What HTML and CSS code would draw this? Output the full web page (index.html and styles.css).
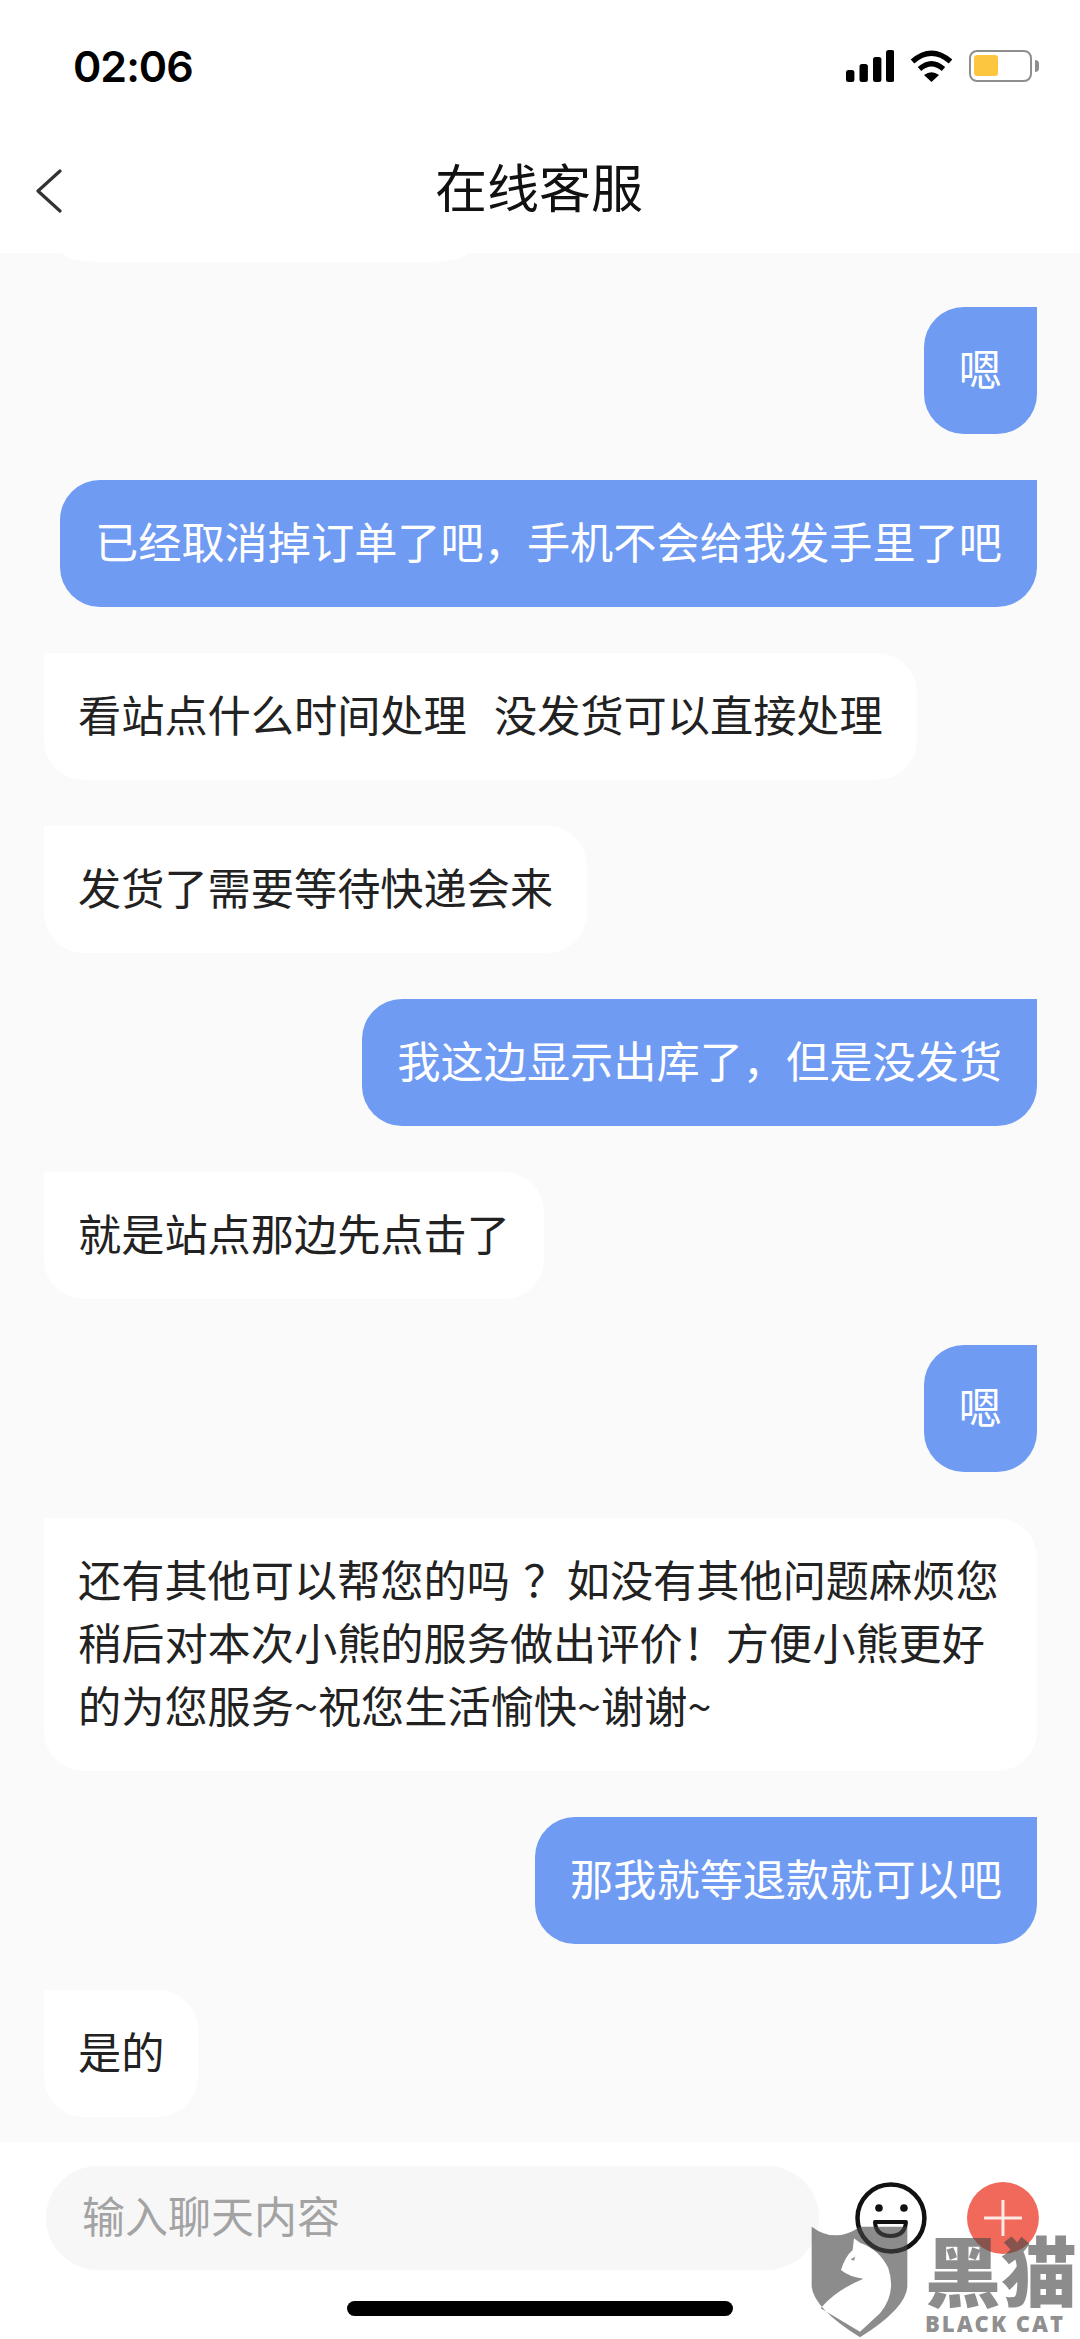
FILE: index.html
```html
<!DOCTYPE html>
<html lang="zh-CN">
<head>
    <meta charset="UTF-8">
    <meta name="viewport" content="width=device-width, initial-scale=1.0">
    <title>在线客服</title>
    <link rel="stylesheet" href="styles.css">
</head>
<body>
    <div class="top">
        <div class="status-bar">
            <span class="time">02:06</span>
            <div class="status-icons">
                <svg class="signal" width="48" height="32" viewBox="0 0 48 32">
                    <rect x="0" y="20" width="8.4" height="12" rx="2.5"/>
                    <rect x="13.5" y="14" width="8.4" height="18" rx="2.5"/>
                    <rect x="27" y="7" width="8.4" height="25" rx="2.5"/>
                    <rect x="40" y="0" width="8.4" height="32" rx="2.5"/>
                </svg>
                <svg class="wifi" width="43" height="32" viewBox="0 0 43 32">
                    <path d="M2.5 11.5Q21.5 -5 40.5 11.5" fill="none" stroke="#000" stroke-width="5.4"/>
                    <path d="M9.5 19Q21.5 8.5 33.5 19" fill="none" stroke="#000" stroke-width="5.2"/>
                    <path d="M14 25Q21.5 19.5 29 25L21.5 32Z"/>
                </svg>
                <div class="battery">
                    <div class="battery-fill"></div>
                </div>
                <div class="battery-nub"></div>
            </div>
        </div>
        <div class="nav">
            <svg class="back" width="30" height="46" viewBox="0 0 30 46">
                <path d="M24 3L2 23L24 43" fill="none" stroke="#333" stroke-width="3.2" stroke-linecap="round" stroke-linejoin="round"/>
            </svg>
            <h1 class="title">在线客服</h1>
        </div>
    </div>

    <div class="chat">
        <div class="peek"></div>
        <div class="msg user">嗯</div>
        <div class="msg user">已经取消掉订单了吧，手机不会给我发手里了吧</div>
        <div class="msg agent">看站点什么时间处理  没发货可以直接处理</div>
        <div class="msg agent">发货了需要等待快递会来</div>
        <div class="msg user">我这边显示出库了，但是没发货</div>
        <div class="msg agent">就是站点那边先点击了</div>
        <div class="msg user">嗯</div>
        <div class="msg agent">还有其他可以帮您的吗 ？如没有其他问题麻烦您稍后对本次小熊的服务做出评价！方便小熊更好的为您服务~祝您生活愉快~谢谢~</div>
        <div class="msg user">那我就等退款就可以吧</div>
        <div class="msg agent">是的</div>
    </div>

    <div class="bottom">
        <div class="input-row">
            <div class="input">输入聊天内容</div>
            <svg class="smile" width="72" height="72" viewBox="0 0 72 72">
                <circle cx="36" cy="36" r="33.5" fill="#fff" stroke="#111" stroke-width="4.5"/>
                <circle cx="24" cy="26" r="3.8" fill="#111"/>
                <circle cx="49" cy="26" r="3.8" fill="#111"/>
                <path d="M20 40H51Q50 54 35.5 54Q21 54 20 40Z" fill="#fff" stroke="#111" stroke-width="4" stroke-linejoin="round"/>
            </svg>
            <svg class="plus" width="72" height="72" viewBox="0 0 72 72">
                <circle cx="36" cy="36" r="36" fill="#f0695a"/>
                <path d="M17 36H55M36 18V54" stroke="#fde9e5" stroke-width="3"/>
            </svg>
        </div>
        <div class="home-bar"></div>
    </div>

    <div class="watermark">
        <svg class="shield" width="98" height="113" viewBox="90 375 294 339">
            <path fill-rule="evenodd" d="M95 380Q165 432 240 380H382V560Q378 625 240 712Q102 625 95 560ZM222 415L240 428Q300 450 325 505Q350 580 300 640L240 695L122 625Q165 572 250 536Q210 532 183 510Q195 470 218 450ZM212 478L226 470L222 482Z"/>
        </svg>
        <div class="brand">
            <div class="brand-cn">黑猫</div>
            <div class="brand-en">BLACK CAT</div>
        </div>
    </div>
</body>
</html>
```

FILE: styles.css
```css
body {
    font-family: "Noto Sans CJK SC", "Noto Sans", sans-serif;
    margin: 0;
    width: 1080px;
    height: 2339px;
    overflow: hidden;
    position: relative;
    display: flex;
    flex-direction: column;
    background-color: #fff;
    color: #222;
}
.top {
    background-color: #fff;
}
.status-bar {
    height: 135px;
    box-sizing: border-box;
    padding: 50px 41px 0 73px;
    display: flex;
    justify-content: space-between;
    align-items: flex-start;
}
.time {
    font-family: "Inter", "Liberation Sans", sans-serif;
    font-size: 43px;
    font-weight: 600;
    letter-spacing: -1px;
    line-height: 32px;
    color: #000;
}
.status-icons {
    display: flex;
    align-items: flex-start;
}
.signal {
    margin-right: 16px;
}
.wifi {
    margin-right: 16px;
}
.battery {
    width: 63px;
    height: 32px;
    box-sizing: border-box;
    border: 2.5px solid #8e8e8e;
    border-radius: 8px;
    padding: 3px;
}
.battery-fill {
    width: 24px;
    height: 21px;
    background-color: #fdc63f;
    border-radius: 3px;
}
.battery-nub {
    width: 4px;
    height: 12px;
    margin: 10px 0 0 3px;
    background-color: #8e8e8e;
    border-radius: 0 4px 4px 0;
}
.nav {
    height: 118px;
    padding-left: 36px;
    display: flex;
    align-items: center;
}
.back {
    margin-top: -6px;
}
.title {
    margin: -16px 0 0 369px;
    font-size: 52px;
    font-weight: 400;
    line-height: 60px;
    color: #111;
}
.chat {
    flex: 1;
    display: flex;
    flex-direction: column;
    align-items: flex-start;
    gap: 46px;
    background-color: #fafafa;
    padding: 0 43px 0 44px;
}
.peek {
    width: 404px;
    height: 9px;
    margin: 0 0 -1px 19px;
    background-color: #fff;
    border-radius: 0 0 40px 40px / 0 0 9px 9px;
}
.msg {
    box-sizing: border-box;
    max-width: 993px;
    padding: 29px 35px 35px;
    font-size: 43.2px;
    line-height: 63px;
    white-space: pre-wrap;
    word-spacing: 4px;
}
.user {
    align-self: flex-end;
    background-color: #6f9bf3;
    color: #fff;
    border-radius: 40px 0 40px 40px;
}
.agent {
    padding-left: 34px;
    padding-right: 34px;
    background-color: #fff;
    border-radius: 0 40px 40px 40px;
}
.bottom {
    background-color: #fff;
    height: 197px;
    box-sizing: border-box;
    padding-top: 24px;
}
.input-row {
    display: flex;
    align-items: center;
    padding: 0 41px 0 46px;
}
.input {
    width: 774px;
    height: 104px;
    box-sizing: border-box;
    padding-left: 36px;
    margin-right: 36px;
    background-color: #f7f7f7;
    border-radius: 52px;
    font-size: 43px;
    line-height: 97px;
    color: #a3a3a3;
}
.plus {
    margin-left: 40px;
}
.home-bar {
    width: 386px;
    height: 15px;
    margin: 31px auto 0;
    background-color: #000;
    border-radius: 8px;
}
/* 水印盖在最上层 */
.watermark {
    position: absolute;
    left: 810px;
    top: 2225px;
    display: flex;
    color: rgba(71, 69, 70, 0.62);
    fill: rgba(71, 69, 70, 0.62);
}
.shield {
    display: block;
}
.brand {
    margin-left: 17px;
}
.brand-cn {
    font-size: 76px;
    font-weight: 900;
    line-height: 76px;
    margin-top: 5px;
}
.brand-en {
    font-family: "Open Sans", "Liberation Sans", sans-serif;
    font-size: 22px;
    font-weight: 800;
    line-height: 24px;
    letter-spacing: 2px;
    margin-top: 5px;
    white-space: nowrap;
}
```
